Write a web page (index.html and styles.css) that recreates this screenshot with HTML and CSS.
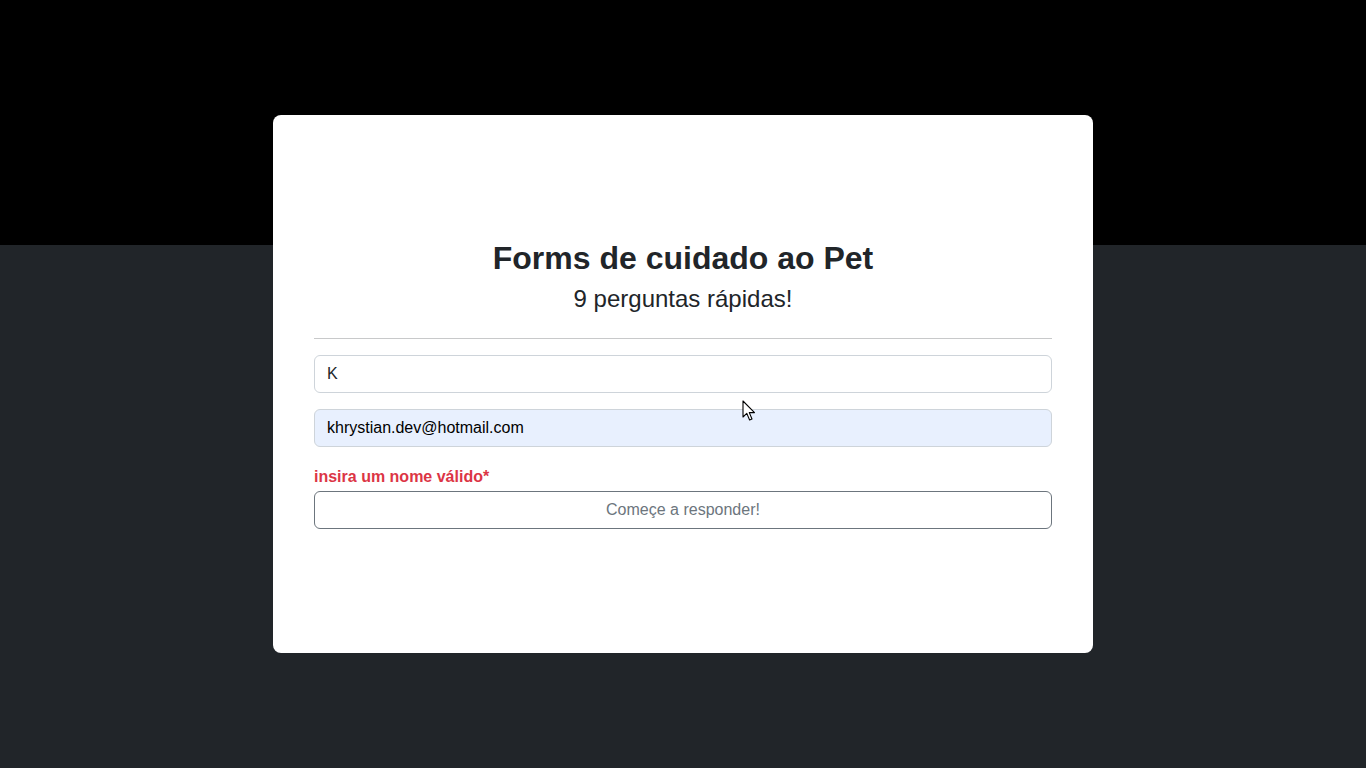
FILE: index.html
```html
<!DOCTYPE html>
<html lang="pt-BR">
<head>
<meta charset="utf-8">
<title>Forms de cuidado ao Pet</title>
<link rel="stylesheet" href="styles.css">
</head>
<body>
<main class="card">
  <h1 class="title">Forms de cuidado ao Pet</h1>
  <p class="subtitle">9 perguntas rápidas!</p>
  <hr class="divider">
  <form class="form">
    <input class="field" type="text" value="K">
    <input class="field field-autofill" type="email" value="khrystian.dev@hotmail.com">
    <p class="error">insira um nome válido*</p>
    <button class="start-btn" type="button">Começe a responder!</button>
  </form>
</main>
<svg class="cursor" width="14" height="22" viewBox="0 0 14 22" xmlns="http://www.w3.org/2000/svg">
  <path d="M1 1 L1 17 L4.8 13.4 L7.6 20 L10 19 L7.3 12.6 L12.5 12.6 Z" fill="#fff" stroke="#000" stroke-width="1.1" stroke-linejoin="round"/>
</svg>
</body>
</html>
```

FILE: styles.css
```css
* { box-sizing: border-box; }

html, body { margin: 0; padding: 0; }

body {
  min-height: 768px;
  background: linear-gradient(#000 0, #000 245px, #212529 245px, #212529 100%);
  font-family: "Liberation Sans", Arial, sans-serif;
  color: #212529;
  padding-top: 115px;
  position: relative;
}

.card {
  width: 820px;
  height: 538px;
  margin: 0 auto;
  background: #fff;
  border-radius: 8px;
  padding: 0 41px;
  display: flex;
  flex-direction: column;
  justify-content: center;
}

.title {
  margin: 0 0 8px;
  font-size: 32px;
  font-weight: 700;
  line-height: 1.2;
  text-align: center;
}

.subtitle {
  margin: 0 0 8px;
  font-size: 24px;
  line-height: 1.2;
  text-align: center;
}

.divider {
  margin: 16px 0;
  border: 0;
  border-top: 1px solid #c8c9ca;
  height: 0;
}

.form {
  display: flex;
  flex-direction: column;
}

.field {
  height: 38px;
  width: 100%;
  padding: 6px 12px;
  font-family: "Liberation Sans", Arial, sans-serif;
  font-size: 16px;
  color: #212529;
  background: #fff;
  border: 1px solid #ced4da;
  border-radius: 6px;
  margin: 0 0 16px;
  outline: none;
}

.field-autofill {
  background: #e8f0fe;
  color: #000;
}

.error {
  margin: 2px 0 2px;
  font-size: 16px;
  font-weight: 700;
  line-height: 24px;
  color: #dc3545;
}

.start-btn {
  height: 38px;
  width: 100%;
  padding: 6px 12px;
  font-family: "Liberation Sans", Arial, sans-serif;
  font-size: 16px;
  color: #6c757d;
  background: #fff;
  border: 1px solid #6c757d;
  border-radius: 6px;
}

.cursor {
  position: absolute;
  left: 742px;
  top: 400px;
}
```
